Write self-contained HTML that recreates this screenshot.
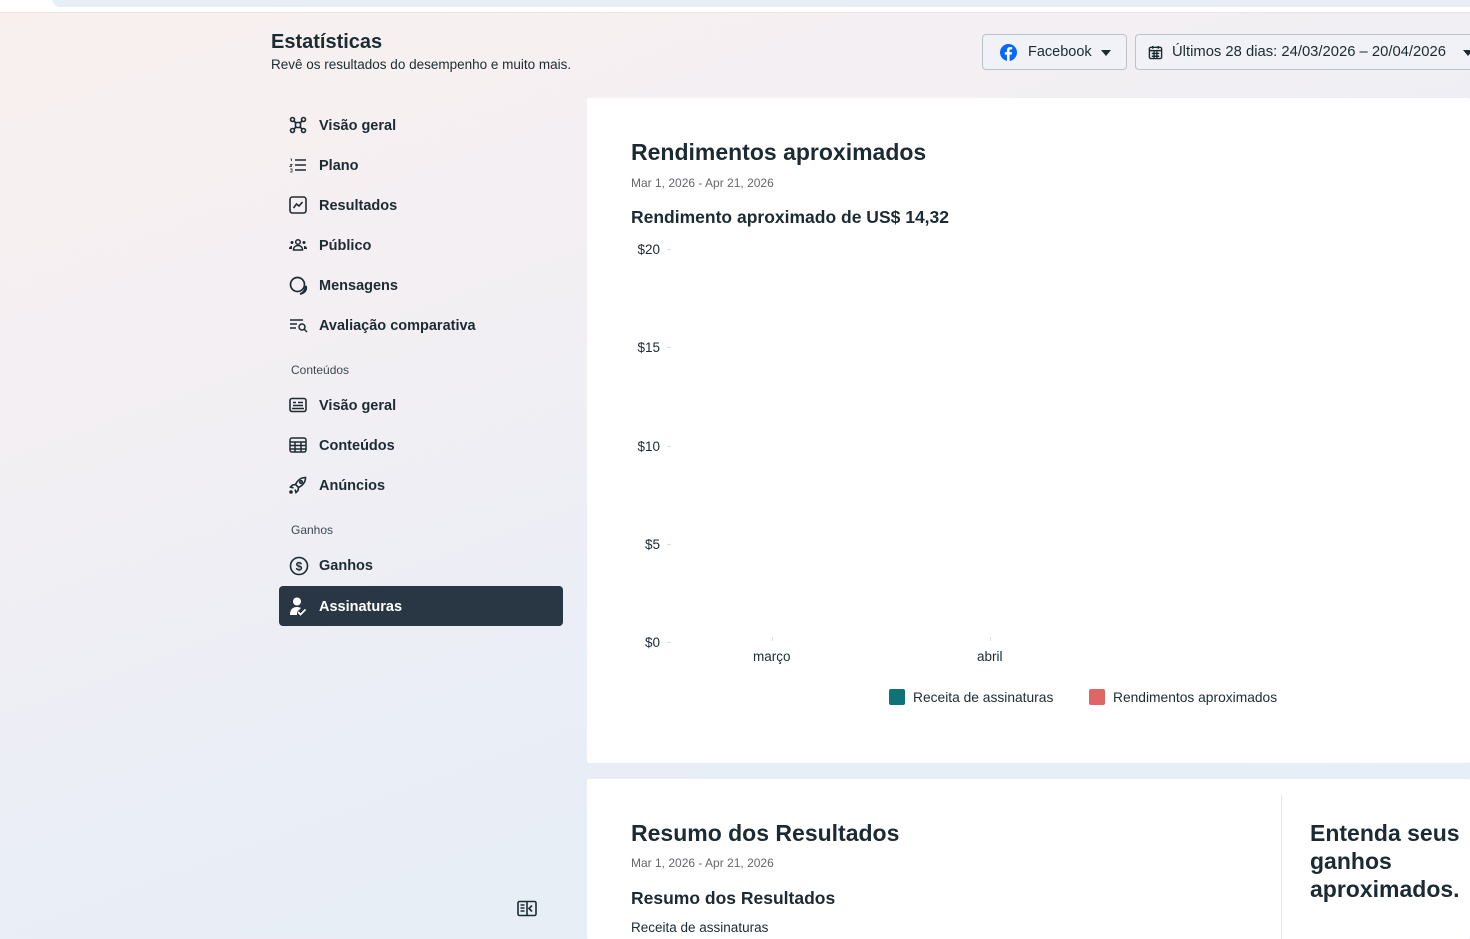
<!DOCTYPE html>
<html><head><meta charset="utf-8"><style>
*{margin:0;padding:0;box-sizing:border-box}
html{overflow:hidden;width:1470px;height:939px}
body{width:1470px;height:939px;overflow:hidden;font-family:"Liberation Sans",sans-serif;color:#1c2b33;position:relative;
background:linear-gradient(160deg,#f9f0ee 0%,#f3eff3 30%,#eaeef6 60%,#e4eef7 100%);}
.topbar{position:absolute;left:0;top:0;width:1470px;height:13px;background:#fff;border-bottom:1px solid #e4e6ea}
.topbar div{position:absolute;left:52px;top:-10px;right:-10px;height:17px;background:#e9edf6;border-radius:10px}
.abs{position:absolute}
h1{position:absolute;left:271px;top:31px;font-size:20px;font-weight:600;color:#1c2b33}
.sub{left:271px;top:57px;font-size:13.5px;color:#1c2b33}
.btn{position:absolute;top:34px;height:36px;border:1px solid #bcc3ca;border-radius:4px;background:#f1f2f7;font-size:14.5px;display:flex;align-items:center}
.nav{position:absolute;left:279px;width:284px;height:40px;display:flex;align-items:center;font-size:14.5px;font-weight:bold;color:#1c2b33;border-radius:4px}
.nav svg{position:absolute;left:10px;top:11px}
.nav span{position:absolute;left:40px;top:13px}
.sec{position:absolute;left:291px;font-size:12px;color:#3c4a52}
.card{position:absolute;background:#fff;border-radius:2px;overflow:hidden}
.ylab{position:absolute;font-size:13.5px;color:#1c2b33;text-align:right;width:40px;left:620px}
.tick{position:absolute;left:667px;width:4px;height:1px;background:#ddd}
</style></head><body>
<div class="topbar"><div></div></div>
<h1>Estatísticas</h1>
<div class="abs sub">Revê os resultados do desempenho e muito mais.</div>

<div class="btn" style="left:982px;width:145px">
<svg class="abs" style="left:17px;top:9px" width="17" height="17" viewBox="0 0 24 24"><circle cx="12" cy="12" r="12" fill="#0866ff"/><path d="M13.5 24V15h3l.5-3.5h-3.5V9.3c0-1 .3-1.7 1.8-1.7h1.9V4.5c-.3 0-1.5-.2-2.8-.2-2.8 0-4.6 1.7-4.6 4.8v2.4H6.8V15h3V24z" fill="#fff"/></svg>
<span class="abs" style="left:45px;top:9px">Facebook</span>
<span class="abs" style="left:118px;top:15px;border:5px solid transparent;border-top:6px solid #1c2b33;border-bottom:0"></span>
</div>
<div class="btn" style="left:1135px;width:345px">
<svg class="abs" style="left:12px;top:10px" width="15" height="15" viewBox="0 0 16 16" fill="none" stroke="#1c2b33" stroke-width="1.5"><rect x="1.5" y="2.5" width="13" height="12" rx="1.5"/><path d="M1.5 6h13M5 1v3M11 1v3M4 9h8M4 12h8M6.5 6v8M9.5 6v8"/></svg>
<span class="abs" style="left:36px;top:9px;font-size:14.8px">Últimos 28 dias: 24/03/2026 – 20/04/2026</span>
<span class="abs" style="left:327px;top:15px;border:5px solid transparent;border-top:6px solid #1c2b33;border-bottom:0"></span>
</div>

<div class="nav" style="top:105px"><svg width="18" height="18" viewBox="0 0 18 18" fill="none" stroke="#1c2b33" stroke-width="1.6"><circle cx="3.5" cy="3.5" r="2"/><circle cx="14.5" cy="3.5" r="2"/><circle cx="3.5" cy="14.5" r="2"/><circle cx="14.5" cy="14.5" r="2"/><path d="M5 5l2.5 2.5M13 5l-2.5 2.5M5 13l2.5-2.5M13 13l-2.5-2.5"/><rect x="6.5" y="6.5" width="5" height="5" rx="1"/></svg><span>Visão geral</span></div>
<div class="nav" style="top:145px"><svg width="18" height="18" viewBox="0 0 18 18" fill="none" stroke="#1c2b33" stroke-width="1.6"><path d="M6 4h11M6 9h11M6 14h11"/><path d="M1.5 3h1v2M1 8.5h2l-2 2h2M1 13h2v3H1" stroke-width="0.8"/></svg><span>Plano</span></div>
<div class="nav" style="top:185px"><svg width="18" height="18" viewBox="0 0 18 18" fill="none" stroke="#1c2b33" stroke-width="1.6"><rect x="1" y="1" width="16" height="16" rx="2.5"/><path d="M4.5 12l3-4 2.5 2 3.5-4"/></svg><span>Resultados</span></div>
<div class="nav" style="top:225px"><svg width="18" height="18" viewBox="0 0 18 18" fill="#1c2b33"><circle cx="9" cy="6" r="2.3" fill="none" stroke="#1c2b33" stroke-width="1.5"/><path d="M4.5 14c0-3 2-4.5 4.5-4.5s4.5 1.5 4.5 4.5z" fill="none" stroke="#1c2b33" stroke-width="1.5"/><circle cx="3" cy="6.5" r="1.5"/><circle cx="15" cy="6.5" r="1.5"/><path d="M0 13c0-2 1-3 3-3v3zM18 13c0-2-1-3-3-3v3z"/></svg><span>Público</span></div>
<div class="nav" style="top:265px"><svg width="20" height="20" viewBox="0 0 20 20" fill="none" stroke="#1c2b33" stroke-width="1.7"><circle cx="8.5" cy="8.5" r="7"/><path d="M17 10c1 4-1 7-6 8 3-1 5-3 6-8z" fill="#1c2b33"/></svg><span>Mensagens</span></div>
<div class="nav" style="top:305px"><svg width="20" height="18" viewBox="0 0 20 18" fill="none" stroke="#1c2b33" stroke-width="1.5"><path d="M1 4h13M1 8h7M1 12h6"/><circle cx="13" cy="11" r="3"/><path d="M15 13l3 3"/></svg><span>Avaliação comparativa</span></div>
<div class="sec" style="top:363px">Conteúdos</div>
<div class="nav" style="top:385px"><svg width="18" height="18" viewBox="0 0 18 18" fill="none" stroke="#1c2b33" stroke-width="1.6"><rect x="1" y="2.5" width="16" height="13" rx="2"/><path d="M4 6.5h3M9 6.5h5M4 9.5h10M3 12.5h12"/></svg><span>Visão geral</span></div>
<div class="nav" style="top:425px"><svg width="18" height="18" viewBox="0 0 18 18" fill="none" stroke="#1c2b33" stroke-width="1.5"><rect x="1" y="2" width="16" height="14" rx="2"/><path d="M1 6h16M1 9.5h16M1 13h16M6 6v10M12 6v10"/></svg><span>Conteúdos</span></div>
<div class="nav" style="top:465px"><svg width="18" height="18" viewBox="0 0 18 18" fill="none" stroke="#1c2b33" stroke-width="1.6"><path d="M16.5 1.5c-5 0-8 3-10 7l3 3c4-2 7-5 7-10zM6.5 8.5l-3 .5-2 2 3 1M9.5 11.5l-.5 3-2 2-1-3"/><circle cx="12" cy="6" r="1.3"/><circle cx="2" cy="16" r="1" fill="#1c2b33"/></svg><span>Anúncios</span></div>
<div class="sec" style="top:523px">Ganhos</div>
<div class="nav" style="top:545px"><svg width="20" height="20" viewBox="0 0 20 20" fill="none" stroke="#1c2b33" stroke-width="1.6"><circle cx="10" cy="10" r="8.5"/><text x="10" y="14.5" font-size="12" font-family="Liberation Sans" text-anchor="middle" fill="#1c2b33" stroke="none">$</text></svg><span>Ganhos</span></div>
<div class="nav" style="top:586px;background:#283743;color:#fff"><svg width="18" height="20" viewBox="0 0 18 20" fill="#fff"><circle cx="8" cy="4.5" r="4"/><path d="M1 18c0-6 3-8 7-8 2 0 3 .5 4 1l-4 4v3z"/><path d="M9 15l2.5 2.5 5-5" fill="none" stroke="#fff" stroke-width="1.8"/></svg><span>Assinaturas</span></div>

<svg class="abs" style="left:517px;top:900px" width="20" height="17" viewBox="0 0 20 17" fill="none" stroke="#1c2b33" stroke-width="1.6"><rect x="1" y="1.5" width="18" height="14" rx="1.5"/><path d="M10 1.5v14M3.5 5h4M3.5 8h4M3.5 11h4M15 5.5l-3 3 3 3"/></svg>

<div class="card" style="left:587px;top:98px;width:883px;height:665px">
<div class="abs" style="left:44px;top:41px;font-size:23px;font-weight:600">Rendimentos aproximados</div>
<div class="abs" style="left:44px;top:78px;font-size:12px;color:#65676b">Mar 1, 2026 - Apr 21, 2026</div>
<div class="abs" style="left:44px;top:109px;font-size:17.5px;font-weight:600">Rendimento aproximado de US$ 14,32</div>
</div>
<div class="ylab" style="top:242px">$20</div><div class="tick" style="top:249px"></div>
<div class="ylab" style="top:340px">$15</div><div class="tick" style="top:347px"></div>
<div class="ylab" style="top:439px">$10</div><div class="tick" style="top:446px"></div>
<div class="ylab" style="top:537px">$5</div><div class="tick" style="top:544px"></div>
<div class="ylab" style="top:635px">$0</div><div class="tick" style="top:642px"></div>
<div class="abs" style="left:772px;top:637px;width:1px;height:4px;background:#ddd"></div>
<div class="abs" style="left:990px;top:637px;width:1px;height:4px;background:#ddd"></div>
<div class="abs" style="left:753px;top:649px;font-size:13.5px">março</div>
<div class="abs" style="left:977px;top:649px;font-size:13.5px">abril</div>
<div class="abs" style="left:889px;top:689px;width:16px;height:16px;background:#0d7377;border-radius:2px"></div>
<div class="abs" style="left:913px;top:690px;font-size:13.8px">Receita de assinaturas</div>
<div class="abs" style="left:1089px;top:689px;width:16px;height:16px;background:#e06666;border-radius:2px"></div>
<div class="abs" style="left:1113px;top:690px;font-size:13.8px">Rendimentos aproximados</div>

<div class="card" style="left:587px;top:779px;width:883px;height:160px">
<div class="abs" style="left:44px;top:41px;font-size:23px;font-weight:600">Resumo dos Resultados</div>
<div class="abs" style="left:44px;top:77px;font-size:12px;color:#65676b">Mar 1, 2026 - Apr 21, 2026</div>
<div class="abs" style="left:44px;top:109px;font-size:17.5px;font-weight:600">Resumo dos Resultados</div>
<div class="abs" style="left:44px;top:141px;font-size:13.5px">Receita de assinaturas</div>
<div class="abs" style="left:694px;top:16px;width:1px;height:160px;background:#e4e6ea"></div>
<div class="abs" style="left:723px;top:40px;font-size:23px;font-weight:600;line-height:28px;width:170px">Entenda seus ganhos aproximados.</div>
</div>
</body></html>
